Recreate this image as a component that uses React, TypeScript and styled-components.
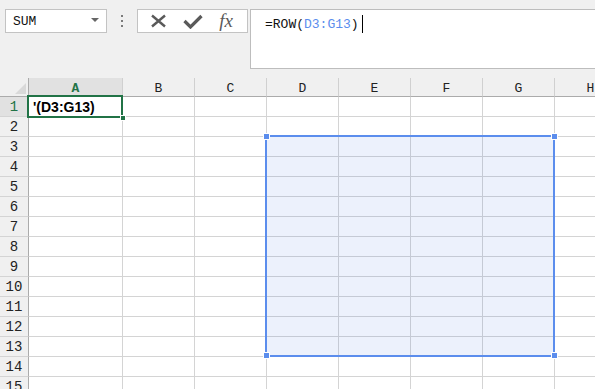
import styled, { createGlobalStyle } from 'styled-components'

const GlobalStyle = createGlobalStyle`
    html, body {
        margin: 0;
        padding: 0;
        background: #ffffff;
        overflow: hidden;
    }
`

const COLUMNS = ['A', 'B', 'C', 'D', 'E', 'F', 'G', 'H']
const ROWS = Array.from({ length: 15 }, (_, i) => i + 1)

export default function App() {
    return (
        <Page>
            <GlobalStyle />
            <TopBar>
                <NameBox>
                    <NameText>SUM</NameText>
                    <DropArrow />
                </NameBox>
                <Dots>
                    <Dot />
                    <Dot />
                    <Dot />
                </Dots>
                <FuncBox>
                    <svg width="17" height="14" viewBox="0 0 17 14">
                        <path d="M2 1.5 L15 12.5 M15 1.5 L2 12.5" stroke="#5a5a5a" strokeWidth="2.4" fill="none" />
                    </svg>
                    <svg width="20" height="15" viewBox="0 0 20 15">
                        <path d="M1.5 7 L7.5 13 L18.5 2" stroke="#5a5a5a" strokeWidth="3.2" fill="none" strokeLinejoin="miter" />
                    </svg>
                    <FxText>fx</FxText>
                </FuncBox>
                <FormulaBar>
                    <FormulaText>
                        =ROW(<RefText>D3:G13</RefText>)
                    </FormulaText>
                    <Caret />
                </FormulaBar>
            </TopBar>
            <Sheet>
                <Corner>
                    <CornerTriangle />
                </Corner>
                {COLUMNS.map((c) => (
                    <ColHeader key={c} $active={c === 'A'}>{c}</ColHeader>
                ))}
                {ROWS.map((r) => (
                    <Row key={r}>
                        <RowHeader $active={r === 1}>{r}</RowHeader>
                        {COLUMNS.map((c) => (
                            <Cell key={c} />
                        ))}
                    </Row>
                ))}
                <ActiveCell>
                    <CellText>'(D3:G13)</CellText>
                    <FillHandle />
                </ActiveCell>
                <Selection>
                    <Handle style={{ left: -4, top: -4 }} />
                    <Handle style={{ right: -5, top: -4 }} />
                    <Handle style={{ left: -4, bottom: -4 }} />
                    <Handle style={{ right: -5, bottom: -4 }} />
                </Selection>
            </Sheet>
        </Page>
    )
}

const Page = styled.div`
    width: 595px;
    height: 389px;
    overflow: hidden;
    background: #ffffff;
`

const TopBar = styled.div`
    display: flex;
    align-items: flex-start;
    height: 78px;
    box-sizing: border-box;
    padding: 9px 0 0 5px;
    background: #f0f0f0;
`

const NameBox = styled.div`
    display: flex;
    align-items: center;
    justify-content: space-between;
    width: 102px;
    height: 24px;
    box-sizing: border-box;
    border: 1px solid #c3c3c3;
    background: #ffffff;
    padding: 0 7px 0 7px;
`

const NameText = styled.span`
    font-family: "Liberation Mono", "DejaVu Sans Mono", monospace;
    font-size: 13px;
    color: #111111;
`

const DropArrow = styled.span`
    width: 0;
    height: 0;
    border-left: 4px solid transparent;
    border-right: 4px solid transparent;
    border-top: 4px solid #666666;
    margin-bottom: 2px;
`

const Dots = styled.div`
    width: 30px;
    height: 24px;
    display: flex;
    flex-direction: column;
    align-items: center;
    justify-content: center;
    gap: 3px;
`

const Dot = styled.span`
    width: 2px;
    height: 2px;
    background: #7a7a7a;
`

const FuncBox = styled.div`
    display: flex;
    align-items: center;
    justify-content: space-around;
    width: 111px;
    height: 24px;
    box-sizing: border-box;
    border: 1px solid #c3c3c3;
    background: #ffffff;
    padding: 0 6px 0 4px;
`

const FxText = styled.span`
    font-family: "Liberation Serif", "DejaVu Serif", serif;
    font-style: italic;
    font-size: 19px;
    color: #5a5a5a;
    line-height: 1;
    margin-top: -2px;
`

const FormulaBar = styled.div`
    display: flex;
    align-items: flex-start;
    flex: 1;
    height: 60px;
    margin-left: 2px;
    box-sizing: border-box;
    border: 1px solid #bdbdbd;
    border-right: none;
    background: #ffffff;
    padding: 7px 0 0 14px;
`

const FormulaText = styled.span`
    font-family: "Liberation Mono", "DejaVu Sans Mono", monospace;
    font-size: 13px;
    line-height: 16px;
    color: #111111;
`

const RefText = styled.span`
    color: #5b8ded;
`

const Caret = styled.span`
    width: 1px;
    height: 18px;
    margin: -2px 0 0 3px;
    background: #000000;
`

const Sheet = styled.div`
    position: relative;
    display: grid;
    grid-template-columns: 29px 94px repeat(6, 72px) 72px;
    grid-template-rows: 19px;
    grid-auto-rows: 20px;
    width: 627px;
`

const Corner = styled.div`
    position: relative;
    background: #f0f0f0;
    box-sizing: border-box;
    border-right: 1px solid #ababab;
    border-bottom: 1px solid #ababab;
`

const CornerTriangle = styled.span`
    position: absolute;
    right: 2px;
    bottom: 2px;
    width: 0;
    height: 0;
    border-left: 11px solid transparent;
    border-bottom: 11px solid #d9d9d9;
`

const ColHeader = styled.div<{ $active?: boolean }>`
    display: flex;
    align-items: center;
    justify-content: center;
    box-sizing: border-box;
    background: ${(p) => (p.$active ? '#e1e1e1' : '#f0f0f0')};
    color: ${(p) => (p.$active ? '#217346' : '#222222')};
    font-weight: ${(p) => (p.$active ? 700 : 400)};
    border-right: 1px solid #d0d0d0;
    border-bottom: 1px solid #ababab;
    font-family: "Liberation Mono", "DejaVu Sans Mono", monospace;
    font-size: 13px;
    padding-top: 2px;
`

const Row = styled.div`
    display: contents;
`

const RowHeader = styled.div<{ $active?: boolean }>`
    display: flex;
    align-items: center;
    justify-content: center;
    box-sizing: border-box;
    background: ${(p) => (p.$active ? '#e1e1e1' : '#f0f0f0')};
    color: ${(p) => (p.$active ? '#217346' : '#222222')};
    border-right: 1px solid #ababab;
    border-bottom: 1px solid #d4d4d4;
    font-family: "Liberation Mono", "DejaVu Sans Mono", monospace;
    font-size: 14px;
    padding-top: 1px;
`

const Cell = styled.div`
    box-sizing: border-box;
    border-right: 1px solid #d4d4d4;
    border-bottom: 1px solid #d4d4d4;
`

const ActiveCell = styled.div`
    position: absolute;
    left: 27px;
    top: 17px;
    width: 96px;
    height: 23px;
    box-sizing: border-box;
    border: 2px solid #217346;
    display: flex;
    align-items: center;
    padding-left: 4px;
`

const CellText = styled.span`
    font-family: "Liberation Sans", Arial, sans-serif;
    font-weight: 700;
    font-size: 14px;
    color: #000000;
`

const FillHandle = styled.span`
    position: absolute;
    right: -5px;
    bottom: -5px;
    width: 6px;
    height: 6px;
    box-sizing: border-box;
    background: #217346;
    border: 1px solid #ffffff;
`

const Selection = styled.div`
    position: absolute;
    left: 265px;
    top: 57px;
    width: 290px;
    height: 222px;
    box-sizing: border-box;
    border: 2px solid #5b8ded;
    background: rgba(70, 120, 230, 0.1);
`

const Handle = styled.span`
    position: absolute;
    width: 7px;
    height: 7px;
    box-sizing: border-box;
    background: #5b8ded;
    border: 1px solid #ffffff;
`
